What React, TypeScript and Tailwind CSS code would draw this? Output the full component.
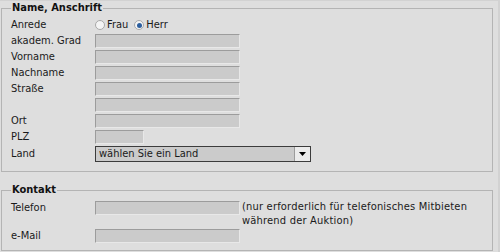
import React from 'react';

const inputCls = 'h-[14px] bg-[#cbcbcb] border border-t-[#9c9c9c] border-l-[#9c9c9c] border-b-[#e8e8e8] border-r-[#e8e8e8]';

const Radio: React.FC<{ checked?: boolean }> = ({ checked }) => (
  <span className="inline-flex items-center justify-center w-[10px] h-[10px] rounded-full border border-[#a8a8a8] bg-[#f4f4f4]">
    {checked && <span className="w-[5px] h-[5px] rounded-full bg-[#2d5f9e]" />}
  </span>
);

const Row: React.FC<{ label?: string; children: React.ReactNode; h?: string }> = ({ label, children, h = 'h-[16px]' }) => (
  <div className={`flex items-center ${h}`}>
    <span className="w-[84px] shrink-0">{label}</span>
    {children}
  </div>
);

const App: React.FC = () => {
  return (
    <div className="w-[500px] h-[252px] bg-[#dedede] overflow-hidden text-[11px] leading-[14px] text-[#1a1a1a] font-['DejaVu_Sans_Condensed','DejaVu_Sans',sans-serif] pl-[1px] border-t border-r-2 border-[#d2d2d2]">
      <fieldset className="w-[492px] h-[171px] border border-[#b4b4b4] px-[9px] pt-[1px] m-0">
        <legend className="px-[1px] font-bold text-[#111]">Name, Anschrift</legend>
        <Row label="Anrede" h="h-[17px]">
          <span className="flex items-center gap-[2px] pt-[1px]">
            <Radio />
            <span className="mr-[4px]">Frau</span>
            <Radio checked />
            <span>Herr</span>
          </span>
        </Row>
        <Row label="akadem. Grad"><div className={`${inputCls} w-[145px]`} /></Row>
        <Row label="Vorname"><div className={`${inputCls} w-[145px]`} /></Row>
        <Row label="Nachname"><div className={`${inputCls} w-[145px]`} /></Row>
        <Row label="Straße"><div className={`${inputCls} w-[145px]`} /></Row>
        <Row><div className={`${inputCls} w-[145px]`} /></Row>
        <Row label="Ort"><div className={`${inputCls} w-[145px]`} /></Row>
        <Row label="PLZ"><div className={`${inputCls} w-[49px]`} /></Row>
        <Row label="Land" h="h-[18px]">
          <div className="flex w-[216px] h-[16px] border border-[#3c3c3c] bg-[#cbcbcb]">
            <span className="flex-1 pl-[3px] leading-[14px]">wählen Sie ein Land</span>
            <span className="w-[16px] flex items-center justify-center bg-[#ececec] border-l border-[#9c9c9c]">
              <svg width="7" height="4" viewBox="0 0 7 4"><path d="M0 0h7L3.5 4z" fill="#000" /></svg>
            </span>
          </div>
        </Row>
      </fieldset>
      <fieldset className="w-[492px] h-[68px] mt-[11px] border border-[#b4b4b4] px-[9px] pt-[3px] m-0">
        <legend className="px-[1px] font-bold text-[#111]">Kontakt</legend>
        <div className="flex items-start">
          <span className="w-[84px] shrink-0 pt-[1px]">Telefon</span>
          <div className={`${inputCls} w-[145px] mt-[1px]`} />
          <span className="ml-[2px] leading-[14px] tracking-[0.2px]">(nur erforderlich für telefonisches Mitbieten<br />während der Auktion)</span>
        </div>
        <div className="flex items-center h-[16px]">
          <span className="w-[84px] shrink-0">e-Mail</span>
          <div className={`${inputCls} w-[145px]`} />
        </div>
      </fieldset>
    </div>
  );
};

export default App;
